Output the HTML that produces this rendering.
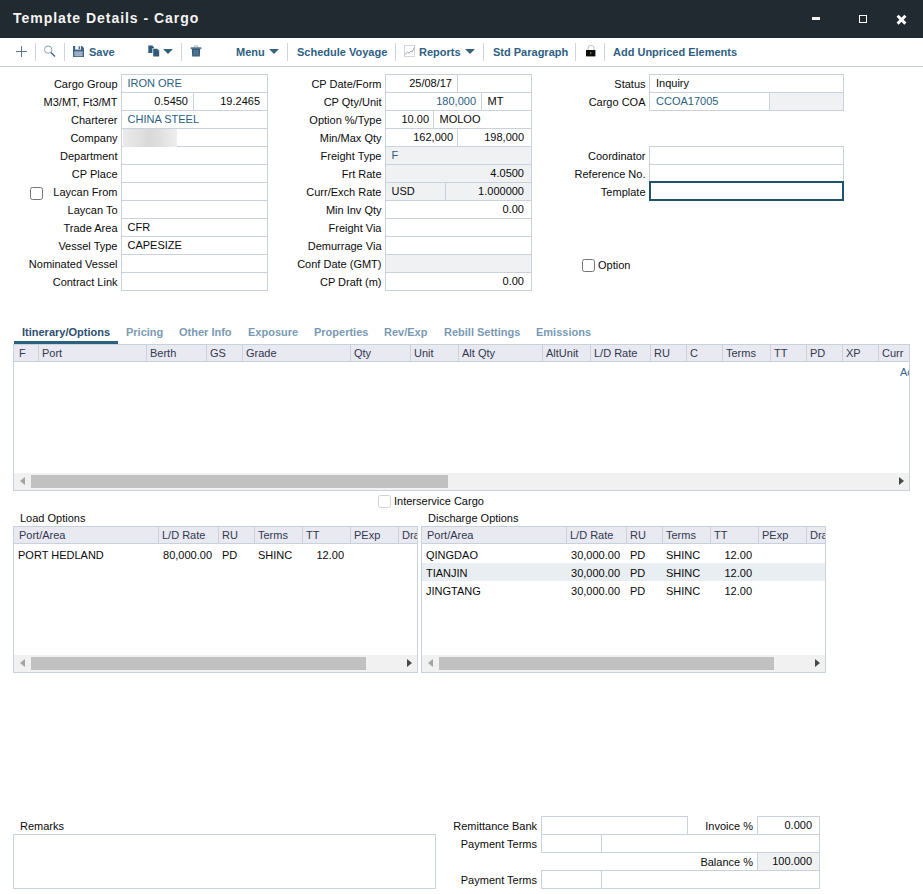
<!DOCTYPE html>
<html><head><meta charset="utf-8"><title>Template Details - Cargo</title>
<style>
html,body{margin:0;padding:0;}
body{width:923px;height:894px;position:relative;overflow:hidden;background:#fff;font-family:"Liberation Sans",sans-serif;font-size:11px;color:#0a0a0a;}
.abs{position:absolute;}
#titlebar{position:absolute;left:0;top:0;width:923px;height:38px;background:#222a31;}
#title{position:absolute;left:13px;top:10px;color:#f4f4f4;font-weight:bold;font-size:14px;letter-spacing:0.96px;line-height:16px;white-space:nowrap;}
#toolbar{position:absolute;left:0;top:38px;width:923px;height:28px;border-bottom:1px solid #c5ccd6;background:#fff;}
.tb{position:absolute;top:8px;font-weight:bold;font-size:11px;color:#2e5f83;line-height:13px;white-space:nowrap;}
.sep{position:absolute;top:5px;width:1px;height:18px;background:#cdd5e0;}
.lbl{position:absolute;text-align:right;line-height:13px;height:13px;white-space:nowrap;color:#0a0a0a;}
.inp{position:absolute;box-sizing:border-box;border:1px solid #c9d1dc;background:#fff;height:19px;line-height:15px;padding:1px 5px 0 5.5px;white-space:nowrap;overflow:hidden;color:#0a0a0a;}
.ro{background:#f0f1f3;}
.r{text-align:right;}
.r7{text-align:right;padding-right:7px;}
.lnk{color:#2c5f82;}
.cb{position:absolute;box-sizing:border-box;width:13px;height:13px;border:1px solid #767676;border-radius:2.5px;background:#fff;}
.tab{position:absolute;top:326px;font-weight:bold;font-size:11px;color:#7a9ab3;line-height:13px;white-space:nowrap;}
.grid{position:absolute;box-sizing:border-box;border:1px solid #c9d1dc;background:#fff;overflow:hidden;}
.gh{position:absolute;left:0;top:0;right:0;height:16px;background:#e8e9f1;border-bottom:1px solid #c9d1dc;}
.gc{position:absolute;top:0;height:16px;line-height:16px;box-sizing:border-box;border-right:1px solid #cdd3dd;padding-left:4px;color:#33384f;white-space:nowrap;overflow:hidden;}
.sb{position:absolute;left:0;right:0;bottom:0;height:17px;background:#f1f1f1;}
.thumb{position:absolute;top:2px;height:13px;background:#c1c1c1;}
.arl{position:absolute;left:6px;top:4px;width:0;height:0;border-top:4px solid transparent;border-bottom:4px solid transparent;border-right:5px solid #a3a3a3;}
.arr{position:absolute;right:5px;top:4px;width:0;height:0;border-top:4px solid transparent;border-bottom:4px solid transparent;border-left:5px solid #484848;}
.cell{position:absolute;line-height:18px;height:18px;white-space:nowrap;color:#0a0a0a;}
.car{position:absolute;width:0;height:0;border-left:5px solid transparent;border-right:5px solid transparent;border-top:5px solid #34627f;}
</style></head><body>

<div id="titlebar"><div id="title">Template Details - Cargo</div>
<div class="abs" style="left:812px;top:17px;width:8px;height:3px;background:#f4f4f4;"></div>
<div class="abs" style="left:859px;top:15px;width:8px;height:8px;box-sizing:border-box;border:1px solid #fff;"></div>
<svg class="abs" style="left:896px;top:14px;" width="11" height="11" viewBox="0 0 11 11"><path d="M1.6 1.8 L9.4 9.6 M9.4 1.8 L1.6 9.6" stroke="#fff" stroke-width="2.9" stroke-linecap="butt"/></svg>
</div>
<div id="toolbar">
<svg class="abs" style="left:15px;top:7px;" width="13" height="13" viewBox="0 0 13 13"><path d="M6.5 1 V12 M1 6.5 H12" stroke="#5a7a94" stroke-width="1" fill="none"/></svg>
<div class="sep" style="left:35px;"></div>
<svg class="abs" style="left:43px;top:7px;" width="14" height="14" viewBox="0 0 14 14"><circle cx="5.2" cy="4.6" r="3.7" stroke="#8aa0b5" stroke-width="1" fill="none"/><path d="M7.9 7.4 L12 11.4" stroke="#3f6180" stroke-width="1.4"/></svg>
<div class="sep" style="left:64px;"></div>
<svg class="abs" style="left:73px;top:8px;" width="11" height="11" viewBox="0 0 11 11"><path d="M0 0 H9 L11 2 V11 H0 Z" fill="#3a6485"/><rect x="2.2" y="0" width="5.8" height="3.6" fill="#fff"/><rect x="5.6" y="0.4" width="1.5" height="2.6" fill="#3a6485"/><rect x="1.4" y="5.4" width="8.2" height="4.8" fill="#a9bccb"/><path d="M1.4 7 H9.6 M1.4 8.7 H9.6" stroke="#8098ad" stroke-width="0.6"/></svg>
<div class="tb" style="left:89px;">Save</div>
<svg class="abs" style="left:148px;top:7px;" width="12" height="12" viewBox="0 0 12 12"><path d="M0.3 0.6 H4.3 L6 2.3 V8 H0.3 Z" fill="#2f5a7a"/><path d="M4.4 3.2 H9.4 L11.6 5.4 V12 H4.4 Z" fill="#fff"/><path d="M5.2 3.8 H9.2 L11.2 5.8 V11.6 H5.2 Z" fill="#2f5a7a"/></svg>
<div class="car" style="left:163px;top:11px;"></div>
<div class="sep" style="left:181px;"></div>
<svg class="abs" style="left:190px;top:7px;" width="12" height="12" viewBox="0 0 12 12"><path d="M4.2 2.4 V0.9 H7.8 V2.4" stroke="#9fb0c0" stroke-width="0.9" fill="none"/><rect x="0.6" y="2.4" width="10.8" height="1.4" fill="#2f5a7a"/><path d="M1.8 3.8 H10.2 L9.8 11.6 H2.2 Z" fill="#2f5a7a"/><path d="M4.2 5 V10.4 M6 5 V10.4 M7.8 5 V10.4" stroke="#8b93a3" stroke-width="0.7"/></svg>
<div class="tb" style="left:236px;">Menu</div>
<div class="car" style="left:269px;top:11px;"></div>
<div class="sep" style="left:287px;"></div>
<div class="tb" style="left:297px;">Schedule Voyage</div>
<div class="sep" style="left:395px;"></div>
<svg class="abs" style="left:404px;top:7px;" width="12" height="12" viewBox="0 0 12 12"><rect x="0.5" y="0.5" width="10" height="11" stroke="#d4d4e4" stroke-width="1" fill="#fff"/><path d="M1 9.5 L3.5 7.2 L5 8.2 L7 6 L8.2 6.8 L10.4 2.5" stroke="#8a9bb0" stroke-width="0.9" fill="none"/></svg>
<div class="tb" style="left:419px;">Reports</div>
<div class="car" style="left:465px;top:11px;"></div>
<div class="sep" style="left:483px;"></div>
<div class="tb" style="left:493px;">Std Paragraph</div>
<div class="sep" style="left:575px;"></div>
<svg class="abs" style="left:586px;top:7px;" width="10" height="12" viewBox="0 0 10 12"><path d="M2 5 V3.4 A3 3 0 0 1 8 3.4 V5" stroke="#b4bccb" stroke-width="0.9" fill="none"/><rect x="0" y="5" width="9.4" height="6.4" fill="#0d0d0d"/><rect x="4.2" y="7" width="1" height="2.2" fill="#9a8a40"/></svg>
<div class="sep" style="left:604px;"></div>
<div class="tb" style="left:613px;">Add Unpriced Elements</div>
</div>
<div class="lbl" style="left:-22.5px;width:140px;top:78px;">Cargo Group</div>
<div class="lbl" style="left:-22.5px;width:140px;top:96px;">M3/MT, Ft3/MT</div>
<div class="lbl" style="left:-22.5px;width:140px;top:114px;">Charterer</div>
<div class="lbl" style="left:-22.5px;width:140px;top:132px;">Company</div>
<div class="lbl" style="left:-22.5px;width:140px;top:150px;">Department</div>
<div class="lbl" style="left:-22.5px;width:140px;top:168px;">CP Place</div>
<div class="lbl" style="left:-22.5px;width:140px;top:186px;">Laycan From</div>
<div class="lbl" style="left:-22.5px;width:140px;top:204px;">Laycan To</div>
<div class="lbl" style="left:-22.5px;width:140px;top:222px;">Trade Area</div>
<div class="lbl" style="left:-22.5px;width:140px;top:240px;">Vessel Type</div>
<div class="lbl" style="left:-22.5px;width:140px;top:258px;">Nominated Vessel</div>
<div class="lbl" style="left:-22.5px;width:140px;top:276px;">Contract Link</div>
<div class="inp lnk" style="left:121px;top:74px;width:147px;">IRON ORE</div>
<div class="inp r" style="left:121px;top:92px;width:73px;">0.5450</div>
<div class="inp r7" style="left:193px;top:92px;width:75px;">19.2465</div>
<div class="inp lnk" style="left:121px;top:110px;width:147px;">CHINA STEEL</div>
<div class="inp " style="left:121px;top:128px;width:147px;"></div>
<div class="abs" style="left:123px;top:129px;width:54px;height:18px;z-index:3;background:linear-gradient(90deg,#ebebeb 0%,#e2e2e2 25%,#d9d9d9 48%,#e0e0e0 70%,#efefef 100%);"></div>
<div class="inp " style="left:121px;top:146px;width:147px;"></div>
<div class="inp " style="left:121px;top:164px;width:147px;"></div>
<div class="inp " style="left:121px;top:182px;width:147px;"></div>
<div class="inp " style="left:121px;top:200px;width:147px;"></div>
<div class="inp " style="left:121px;top:218px;width:147px;">CFR</div>
<div class="inp " style="left:121px;top:236px;width:147px;">CAPESIZE</div>
<div class="inp " style="left:121px;top:254px;width:147px;"></div>
<div class="inp " style="left:121px;top:272px;width:147px;"></div>
<div class="cb" style="left:30px;top:187px;"></div>
<div class="lbl" style="left:241.5px;width:140px;top:78px;">CP Date/Form</div>
<div class="lbl" style="left:241.5px;width:140px;top:96px;">CP Qty/Unit</div>
<div class="lbl" style="left:241.5px;width:140px;top:114px;">Option %/Type</div>
<div class="lbl" style="left:241.5px;width:140px;top:132px;">Min/Max Qty</div>
<div class="lbl" style="left:241.5px;width:140px;top:150px;">Freight Type</div>
<div class="lbl" style="left:241.5px;width:140px;top:168px;">Frt Rate</div>
<div class="lbl" style="left:241.5px;width:140px;top:186px;">Curr/Exch Rate</div>
<div class="lbl" style="left:241.5px;width:140px;top:204px;">Min Inv Qty</div>
<div class="lbl" style="left:241.5px;width:140px;top:222px;">Freight Via</div>
<div class="lbl" style="left:241.5px;width:140px;top:240px;">Demurrage Via</div>
<div class="lbl" style="left:241.5px;width:140px;top:258px;">Conf Date (GMT)</div>
<div class="lbl" style="left:241.5px;width:140px;top:276px;">CP Draft (m)</div>
<div class="inp r" style="left:385px;top:74px;width:73px;">25/08/17</div>
<div class="inp " style="left:457px;top:74px;width:75px;"></div>
<div class="inp r lnk" style="left:385px;top:92px;width:97px;">180,000</div>
<div class="inp " style="left:481px;top:92px;width:51px;">MT</div>
<div class="inp r" style="left:385px;top:110px;width:49px;padding-right:4px;">10.00</div>
<div class="inp " style="left:433px;top:110px;width:99px;">MOLOO</div>
<div class="inp r" style="left:385px;top:128px;width:73px;padding-right:4px;">162,000</div>
<div class="inp r7" style="left:457px;top:128px;width:75px;">198,000</div>
<div class="inp ro lnk" style="left:385px;top:146px;width:147px;">F</div>
<div class="inp ro r7" style="left:385px;top:164px;width:147px;">4.0500</div>
<div class="inp ro" style="left:385px;top:182px;width:61px;">USD</div>
<div class="inp ro r7" style="left:445px;top:182px;width:87px;">1.000000</div>
<div class="inp r7" style="left:385px;top:200px;width:147px;">0.00</div>
<div class="inp " style="left:385px;top:218px;width:147px;"></div>
<div class="inp " style="left:385px;top:236px;width:147px;"></div>
<div class="inp ro" style="left:385px;top:254px;width:147px;"></div>
<div class="inp r7" style="left:385px;top:272px;width:147px;">0.00</div>
<div class="lbl" style="left:505.5px;width:140px;top:78px;">Status</div>
<div class="lbl" style="left:505.5px;width:140px;top:96px;">Cargo COA</div>
<div class="lbl" style="left:505.5px;width:140px;top:150px;">Coordinator</div>
<div class="lbl" style="left:505.5px;width:140px;top:168px;">Reference No.</div>
<div class="lbl" style="left:505.5px;width:140px;top:186px;">Template</div>
<div class="inp " style="left:649px;top:74px;width:195px;padding-left:6px;">Inquiry</div>
<div class="inp lnk" style="left:649px;top:92px;width:121px;padding-left:6px;">CCOA17005</div>
<div class="inp ro" style="left:769px;top:92px;width:75px;"></div>
<div class="inp " style="left:649px;top:146px;width:195px;"></div>
<div class="inp " style="left:649px;top:164px;width:195px;"></div>
<div class="inp " style="left:649px;top:182px;width:195px;border:2px solid #20516f;z-index:2;top:181px;height:20px;"></div>
<div class="cb" style="left:582px;top:259px;"></div>
<div class="lbl" style="left:598px;top:259px;text-align:left;">Option</div>
<div class="tab" style="left:22px;color:#2a4f6e;">Itinerary/Options</div>
<div class="tab" style="left:126px;">Pricing</div>
<div class="tab" style="left:179px;">Other Info</div>
<div class="tab" style="left:248px;">Exposure</div>
<div class="tab" style="left:314px;">Properties</div>
<div class="tab" style="left:384px;">Rev/Exp</div>
<div class="tab" style="left:444px;">Rebill Settings</div>
<div class="tab" style="left:536px;">Emissions</div>
<div class="abs" style="left:14px;top:341px;width:104px;height:3px;background:#2b607f;"></div>
<div class="grid" style="left:13px;top:344px;width:897px;height:147px;">
<div class="gh">
<div class="gc" style="left:0px;width:25px;padding-left:5px;">F</div>
<div class="gc" style="left:25px;width:108px;padding-left:3px;">Port</div>
<div class="gc" style="left:133px;width:60px;padding-left:3px;">Berth</div>
<div class="gc" style="left:193px;width:36px;padding-left:3px;">GS</div>
<div class="gc" style="left:229px;width:108px;padding-left:3px;">Grade</div>
<div class="gc" style="left:337px;width:60px;padding-left:3px;">Qty</div>
<div class="gc" style="left:397px;width:48px;padding-left:3px;">Unit</div>
<div class="gc" style="left:445px;width:84px;padding-left:3px;">Alt Qty</div>
<div class="gc" style="left:529px;width:48px;padding-left:3px;">AltUnit</div>
<div class="gc" style="left:577px;width:60px;padding-left:3px;">L/D Rate</div>
<div class="gc" style="left:637px;width:36px;padding-left:3px;">RU</div>
<div class="gc" style="left:673px;width:36px;padding-left:3px;">C</div>
<div class="gc" style="left:709px;width:48px;padding-left:3px;">Terms</div>
<div class="gc" style="left:757px;width:36px;padding-left:3px;">TT</div>
<div class="gc" style="left:793px;width:36px;padding-left:3px;">PD</div>
<div class="gc" style="left:829px;width:36px;padding-left:3px;">XP</div>
<div class="gc" style="left:865px;width:30px;padding-left:3px;border-right:none;">Curr</div>
</div>
<div class="cell" style="left:886px;top:18px;color:#35688f;">Ac</div>
<div class="sb"><div class="arl"></div><div class="thumb" style="left:17px;width:417px;"></div><div class="arr"></div></div>
</div>
<div class="cb" style="left:378px;top:495px;border-color:#d2d2d2;"></div>
<div class="lbl" style="left:394px;top:495px;text-align:left;">Interservice Cargo</div>
<div class="lbl" style="left:20px;top:512px;text-align:left;">Load Options</div>
<div class="lbl" style="left:428px;top:512px;text-align:left;">Discharge Options</div>
<div class="grid" style="left:13px;top:526px;width:405px;height:147px;">
<div class="gh">
<div class="gc" style="left:0px;width:145px;padding-left:5px;">Port/Area</div>
<div class="gc" style="left:145px;width:60px;padding-left:3px;">L/D Rate</div>
<div class="gc" style="left:205px;width:36px;padding-left:3px;">RU</div>
<div class="gc" style="left:241px;width:48px;padding-left:3px;">Terms</div>
<div class="gc" style="left:289px;width:48px;padding-left:3px;">TT</div>
<div class="gc" style="left:337px;width:48px;padding-left:3px;">PExp</div>
<div class="gc" style="left:385px;width:18px;padding-left:3px;border-right:none;">Dra</div>
</div>
<div class="cell" style="left:4px;top:19px;">PORT HEDLAND</div>
<div class="cell r" style="left:144px;width:54px;top:19px;">80,000.00</div>
<div class="cell" style="left:208px;top:19px;">PD</div>
<div class="cell" style="left:244px;top:19px;">SHINC</div>
<div class="cell r" style="left:288px;width:42px;top:19px;">12.00</div>
<div class="sb"><div class="arl"></div><div class="thumb" style="left:17px;width:335px;"></div><div class="arr"></div></div>
</div>
<div class="grid" style="left:421px;top:526px;width:405px;height:147px;">
<div class="gh">
<div class="gc" style="left:0px;width:145px;padding-left:5px;">Port/Area</div>
<div class="gc" style="left:145px;width:60px;padding-left:3px;">L/D Rate</div>
<div class="gc" style="left:205px;width:36px;padding-left:3px;">RU</div>
<div class="gc" style="left:241px;width:48px;padding-left:3px;">Terms</div>
<div class="gc" style="left:289px;width:48px;padding-left:3px;">TT</div>
<div class="gc" style="left:337px;width:48px;padding-left:3px;">PExp</div>
<div class="gc" style="left:385px;width:18px;padding-left:3px;border-right:none;">Dra</div>
</div>
<div class="cell" style="left:4px;top:19px;">QINGDAO</div>
<div class="cell r" style="left:144px;width:54px;top:19px;">30,000.00</div>
<div class="cell" style="left:208px;top:19px;">PD</div>
<div class="cell" style="left:244px;top:19px;">SHINC</div>
<div class="cell r" style="left:288px;width:42px;top:19px;">12.00</div>
<div class="abs" style="left:0;top:36px;width:403px;height:18px;background:#e8eef2;"></div>
<div class="cell" style="left:4px;top:37px;">TIANJIN</div>
<div class="cell r" style="left:144px;width:54px;top:37px;">30,000.00</div>
<div class="cell" style="left:208px;top:37px;">PD</div>
<div class="cell" style="left:244px;top:37px;">SHINC</div>
<div class="cell r" style="left:288px;width:42px;top:37px;">12.00</div>
<div class="cell" style="left:4px;top:55px;">JINGTANG</div>
<div class="cell r" style="left:144px;width:54px;top:55px;">30,000.00</div>
<div class="cell" style="left:208px;top:55px;">PD</div>
<div class="cell" style="left:244px;top:55px;">SHINC</div>
<div class="cell r" style="left:288px;width:42px;top:55px;">12.00</div>
<div class="sb"><div class="arl"></div><div class="thumb" style="left:17px;width:335px;"></div><div class="arr"></div></div>
</div>
<div class="lbl" style="left:20px;top:820px;text-align:left;">Remarks</div>
<div class="abs" style="left:13px;top:834px;width:423px;height:55px;box-sizing:border-box;border:1px solid #c9d1dc;background:#fff;"></div>
<div class="lbl" style="left:397px;width:140px;top:820px;">Remittance Bank</div>
<div class="inp " style="left:541px;top:816px;width:147px;"></div>
<div class="lbl" style="left:613px;width:140px;top:820px;">Invoice %</div>
<div class="inp r7" style="left:757px;top:816px;width:63px;">0.000</div>
<div class="lbl" style="left:397px;width:140px;top:838px;">Payment Terms</div>
<div class="inp " style="left:541px;top:834px;width:61px;"></div>
<div class="inp " style="left:601px;top:834px;width:219px;"></div>
<div class="lbl" style="left:613px;width:140px;top:856px;">Balance %</div>
<div class="inp r7 ro" style="left:757px;top:852px;width:63px;">100.000</div>
<div class="lbl" style="left:397px;width:140px;top:874px;">Payment Terms</div>
<div class="inp " style="left:541px;top:870px;width:61px;"></div>
<div class="inp " style="left:601px;top:870px;width:219px;"></div>
</body></html>
